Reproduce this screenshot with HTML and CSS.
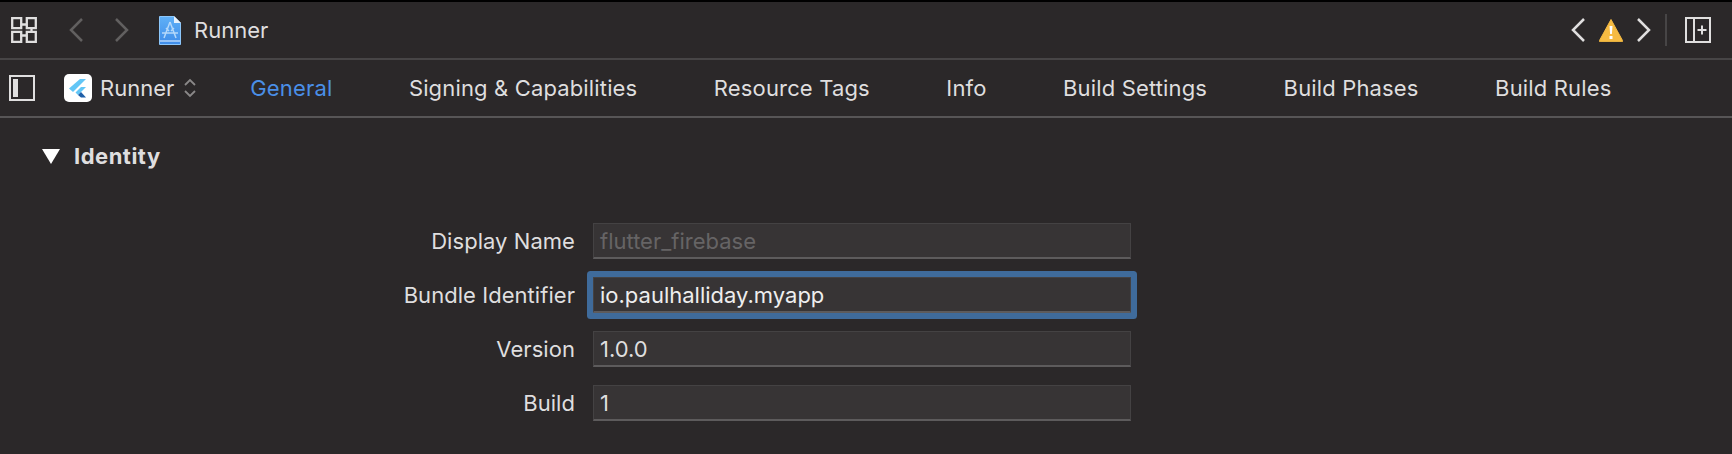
FILE: index.html
```html
<!DOCTYPE html>
<html lang="en">
<head>
    <meta charset="UTF-8">
    <title>Runner</title>
    <link rel="stylesheet" href="styles.css">
</head>
<body>

    <!-- toolbar -->
    <div class="toolbar">
        <svg class="icon-grid" width="26" height="26" viewBox="0 0 26 26" fill="none" stroke="#e0dfdf" stroke-width="2.300">
            <path d="M1.200 1.200h9v10h-9zM15.800 1.200h9v10h-9zM10 7.500h6M1.200 14.800h9v10h-9zM15.800 14.800h9v10h-9zM10 18.500h6M20.500 11v4"/>
        </svg>
        <svg class="icon-back" width="14" height="24" viewBox="0 0 14 24" fill="none" stroke="#626060" stroke-width="2.500">
            <path d="M13 1 2 12l11 11"/>
        </svg>
        <svg class="icon-forward" width="14" height="24" viewBox="0 0 14 24" fill="none" stroke="#626060" stroke-width="2.500">
            <path d="M1 1l11 11L1 23"/>
        </svg>
        <svg class="icon-file" width="22" height="29" viewBox="0 0 22 29">
            <defs>
                <linearGradient id="fileBlue" x1="0" y1="0" x2="0" y2="1">
                    <stop offset="0" stop-color="#5fb0f7"/>
                    <stop offset="1" stop-color="#3f8ce8"/>
                </linearGradient>
            </defs>
            <path d="M.5.500h14.500l6.500 6.500v21.500H.5z" fill="url(#fileBlue)" stroke="#8cc6fa"/>
            <path d="M15 0l7 7h-7z" fill="#e6f1fc"/>
            <path d="M1 25h20" fill="none" stroke="#cfe5fb" stroke-width="1.200"/>
            <path d="M11 6 5 22M11 6l6 16M3 17h16M7 12l3 3M15 12l-3 3" fill="none" stroke="#b4d8fa" stroke-width="1.500"/>
        </svg>
        <span class="toolbar-title">Runner</span>
        <div class="toolbar-right">
            <svg width="14" height="24" viewBox="0 0 14 24" fill="none" stroke="#e0dfdf" stroke-width="2.500">
                <path d="M13 1 2 12l11 11"/>
            </svg>
            <svg class="icon-warning" width="24" height="24" viewBox="0 0 24 24">
                <path d="M12 1.500 23.500 22.500a.8.8 0 0 1-.7 1.300H1.200a.8.8 0 0 1-.7-1.300z" fill="#f6bb42" stroke="#f6bb42" stroke-linejoin="round"/>
                <path d="M10.500 8h3l-.6 8h-1.800zM10.500 18h3v3h-3z" fill="#fff"/>
            </svg>
            <svg width="14" height="24" viewBox="0 0 14 24" fill="none" stroke="#e0dfdf" stroke-width="2.500">
                <path d="M1 1l11 11L1 23"/>
            </svg>
            <div class="toolbar-divider"></div>
            <svg width="26" height="26" viewBox="0 0 26 26" fill="none" stroke="#e0dfdf" stroke-width="2">
                <path d="M1 1h24v24H1zM9 1v24M12.500 13h9M17 8.500v9"/>
            </svg>
        </div>
    </div>

    <!-- tabs -->
    <div class="tabbar">
        <svg class="icon-sidebar" width="26" height="26" viewBox="0 0 26 26">
            <path d="M1 1h24v24H1z" fill="none" stroke="#e0dfdf" stroke-width="2"/>
            <path d="M4 4h5v18H4z" fill="#e0dfdf"/>
        </svg>
        <div class="target">
            <svg width="28" height="28" viewBox="0 0 28 28">
                <rect width="28" height="28" rx="5" fill="#fff"/>
                <path d="M5 14.500 9 18 22 5h-6z" fill="#62c6f6"/>
                <path d="M22 13h-5l-5.500 5.500L14 21z" fill="#62c6f6"/>
                <path d="M14 21l3-3 5 5.500h-5z" fill="#1f5fa8"/>
            </svg>
            <span class="target-name">Runner</span>
            <svg width="12" height="20" viewBox="0 0 12 20" fill="none" stroke="#8a8888" stroke-width="1.800">
                <path d="M1 7l5-5 5 5M1 13l5 5 5-5"/>
            </svg>
        </div>
        <div class="tabs">
            <a class="tab active" href="#">General</a>
            <a class="tab" href="#">Signing &amp; Capabilities</a>
            <a class="tab" href="#">Resource Tags</a>
            <a class="tab" href="#">Info</a>
            <a class="tab" href="#">Build Settings</a>
            <a class="tab" href="#">Build Phases</a>
            <a class="tab" href="#">Build Rules</a>
        </div>
    </div>

    <!-- identity section -->
    <div class="section">
        <div class="section-head">
            <span class="triangle"></span>
            <span class="section-title">Identity</span>
        </div>
        <div class="form">
            <label class="form-label">Display Name</label>
            <div class="field disabled">flutter_firebase</div>
            <label class="form-label">Bundle Identifier</label>
            <div class="field focused">io.paulhalliday.myapp</div>
            <label class="form-label">Version</label>
            <div class="field">1.0.0</div>
            <label class="form-label">Build</label>
            <div class="field">1</div>
        </div>
    </div>

</body>
</html>
```

FILE: styles.css
```css
html, body {
    margin: 0;
    height: 454px;
    overflow: hidden;
}

body {
    background-color: #2b2829;
    color: #dfdedf;
    font-family: Inter, "Liberation Sans", sans-serif;
    font-size: 22px;
}

/* toolbar */
.toolbar {
    display: flex;
    align-items: center;
    box-sizing: border-box;
    height: 60px;
    padding: 0 21px 0 11px;
    border-top: 2px solid #000;
    border-bottom: 2px solid #474546;
}

.icon-back {
    margin-left: 32px;
}

.icon-forward {
    margin-left: 32px;
}

.icon-file {
    margin-left: 30px;
}

.toolbar-title {
    margin-left: 13px;
}

.toolbar-right {
    display: flex;
    align-items: center;
    margin-left: auto;
}

.icon-warning {
    margin: 0 14px;
}

.toolbar-divider {
    width: 2px;
    height: 32px;
    margin: 0 18px 0 14px;
    background-color: #474546;
}

/* tabs */
.tabbar {
    display: flex;
    align-items: center;
    box-sizing: border-box;
    height: 58px;
    padding-left: 9px;
    border-bottom: 2px solid #575556;
}

.target {
    display: flex;
    align-items: center;
    margin-left: 29px;
}

.target-name {
    margin: 0 10px 0 8px;
}

.tabs {
    display: flex;
    gap: 76.5px;
    margin-left: 54px;
    letter-spacing: 0.15px;
}

.tab {
    color: #dfdedf;
    text-decoration: none;
}

.tab.active {
    color: #4a8fe7;
}

/* identity section */
.section-head {
    display: flex;
    align-items: center;
    height: 76px;
    padding-left: 42px;
}

.triangle {
    width: 0;
    height: 0;
    border-left: 9px solid transparent;
    border-right: 9px solid transparent;
    border-top: 15px solid #fff;
}

.section-title {
    margin-left: 14px;
    font-weight: 700;
    letter-spacing: 0.5px;
}

.form {
    display: grid;
    grid-template-columns: 575px 538px;
    grid-auto-rows: 36px;
    gap: 18px;
    align-items: center;
    margin-top: 29px;
}

.form-label {
    text-align: right;
    letter-spacing: 0.05px;
}

.field {
    box-sizing: border-box;
    height: 36px;
    padding: 0 6px;
    line-height: 34px;
    background-color: #373435;
    border: 1px solid #444243;
    border-bottom: 2px solid #5d5b5c;
}

.field.disabled {
    color: #666465;
}

.field.focused {
    box-shadow: 0 0 0 6px #3f6b9b;
    border-radius: 1px;
    color: #eeeeee;
}
```
